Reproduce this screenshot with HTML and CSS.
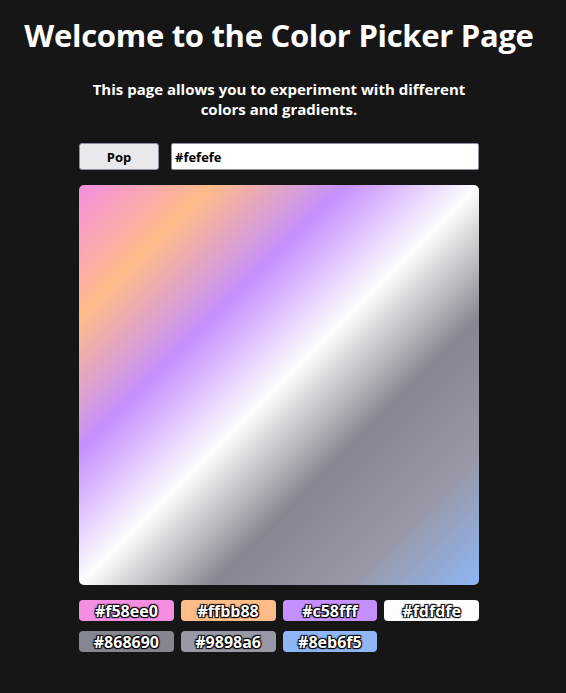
FILE: index.html
```html
<!DOCTYPE html>
<html>
<head>
<meta charset="utf-8">
<link rel="stylesheet" href="styles.css">
</head>
<body>
<div class="page">
  <h1 class="title">Welcome to the Color Picker Page</h1>
  <p class="intro">This page allows you to experiment with different colors and gradients.</p>
  <div class="controls">
    <button class="pop">Pop</button>
    <input class="hex" type="text" value="#fefefe">
  </div>
  <div class="gradient"></div>
  <div class="swatches">
    <div class="swatch" style="background:#f58ee0">#f58ee0</div>
    <div class="swatch" style="background:#ffbb88">#ffbb88</div>
    <div class="swatch" style="background:#c58fff">#c58fff</div>
    <div class="swatch" style="background:#fdfdfe">#fdfdfe</div>
    <div class="swatch" style="background:#868690">#868690</div>
    <div class="swatch" style="background:#9898a6">#9898a6</div>
    <div class="swatch" style="background:#8eb6f5">#8eb6f5</div>
  </div>
</div>
</body>
</html>
```
FILE: styles.css
```css
html, body {
  margin: 0;
  padding: 0;
  background: #161616;
}
body {
  font-family: "Open Sans", "Noto Sans", sans-serif;
  color: #ffffff;
}
.page {
  display: flex;
  flex-direction: column;
  align-items: center;
  padding-top: 14px;
  padding-right: 8px;
}
.title {
  margin: 0;
  font-size: 31px;
  font-weight: 700;
  line-height: 42px;
  letter-spacing: -0.3px;
}
.intro {
  width: 400px;
  margin: 23px 0 0 0;
  text-align: center;
  font-size: 15px;
  font-weight: 700;
  line-height: 20px;
}
.controls {
  width: 400px;
  display: flex;
  gap: 12px;
  margin-top: 24px;
}
.pop {
  width: 80px;
  height: 27px;
  box-sizing: border-box;
  background: #e9e9ed;
  border: 1px solid #8f8f9d;
  border-radius: 3px;
  font-family: inherit;
  font-weight: 700;
  font-size: 13px;
  color: #000;
  padding: 0;
}
.hex {
  flex: 1;
  height: 27px;
  box-sizing: border-box;
  border: 1px solid #8f8f9d;
  border-radius: 2px;
  background: #fff;
  font-family: inherit;
  font-weight: 700;
  font-size: 13px;
  color: #000;
  padding: 0 3px;
  outline: none;
}
.gradient {
  width: 400px;
  height: 400px;
  margin-top: 15px;
  border-radius: 5px;
  background: linear-gradient(135deg, #f58ee0 0%, #ffbb88 16.67%, #c58fff 33.33%, #fdfdfe 50%, #868690 66.67%, #9898a6 83.33%, #8eb6f5 100%);
}
.swatches {
  width: 400px;
  display: grid;
  grid-template-columns: repeat(4, 1fr);
  column-gap: 7px;
  row-gap: 10px;
  margin-top: 15px;
}
.swatch {
  height: 21px;
  border-radius: 4px;
  display: flex;
  align-items: center;
  justify-content: center;
  font-size: 16px;
  font-weight: 700;
  color: #fff;
  text-shadow: 1px 1px 1px #000, -1px -1px 1px #000, 1px -1px 1px #000, -1px 1px 1px #000;
}
```
